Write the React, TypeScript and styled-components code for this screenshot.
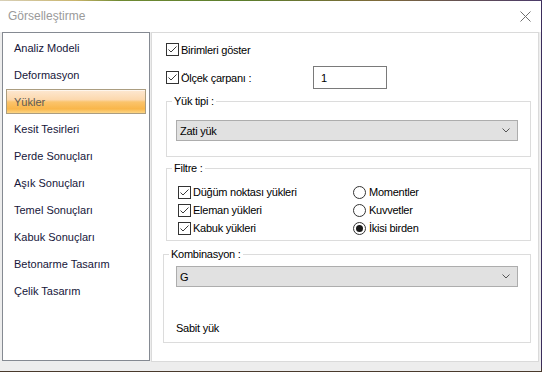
import React from 'react';
import styled, { createGlobalStyle } from 'styled-components';

const GlobalStyle = createGlobalStyle`
  html, body {
    margin: 0;
    padding: 0;
    background: #3b2d5c;
    overflow: hidden;
  }
  body {
    font-family: "Liberation Sans", Arial, sans-serif;
    font-size: 11px;
  }
`;

const Desktop = styled.div`
  width: 542px;
  height: 372px;
  display: flex;
  flex-direction: column;
  background: linear-gradient(180deg, #3b2d5c 0%, #3b2d5c 98%, #4a3a28 100%);
`;

const DesktopStrip = styled.div`
  height: 1px;
  background: linear-gradient(90deg, #d8d0b8 0%, #c9b46a 14%, #6f8a32 22%, #5b7d2c 45%, #7f6a3a 70%, #4b3a6a 100%);
`;

const Window = styled.div`
  width: 541px;
  height: 370px;
  background: #ededed;
  display: flex;
  flex-direction: column;
`;

const TitleBar = styled.div`
  height: 31px;
  background: #ffffff;
  display: flex;
  align-items: center;
  justify-content: space-between;
  padding: 0 10px 1px 8px;
  box-sizing: border-box;
`;

const Title = styled.span`
  font-size: 12px;
  color: #9a9a9a;
`;

const Body = styled.div`
  display: flex;
  gap: 1px;
  padding-left: 2px;
`;

const Sidebar = styled.div`
  width: 148px;
  height: 329px;
  box-sizing: border-box;
  border: 1px solid #858a92;
  background: #ffffff;
  padding: 1px 3px 0 3px;
  display: flex;
  flex-direction: column;
`;

const NavItem = styled.div<{ $active?: boolean }>`
  height: 27px;
  display: flex;
  align-items: center;
  box-sizing: border-box;
  padding-left: 8px;
  color: #16163a;
  font-size: 11px;
  ${(p) =>
    p.$active &&
    `
    height: 25px;
    margin: 1px 0 1px 0;
    padding-left: 7px;
    border: 1px solid #ab9d80;
    color: #5c5a56;
    background: linear-gradient(180deg, #fde8d2 0%, #fcd8ad 42%, #fbc46c 52%, #f9b64a 82%, #fcd585 100%);
    box-shadow: inset 0 1px 0 rgba(255,255,255,0.6);
  `}
`;

const Content = styled.div`
  width: 388px;
  height: 330px;
  box-sizing: border-box;
  border: 1px solid #dadada;
  background: #ffffff;
  padding: 10px 7px 0 14px;
  display: flex;
  flex-direction: column;
  color: #000000;
  letter-spacing: -0.25px;
`;

const Row = styled.label`
  display: flex;
  align-items: center;
  height: 13px;
`;

const ScaleRow = styled.div`
  display: flex;
  align-items: center;
  height: 23px;
  margin-top: 10px;
`;

const ScaleLabel = styled.label`
  display: flex;
  align-items: center;
  width: 147px;
`;

const TextBox = styled.div`
  width: 74px;
  height: 23px;
  box-sizing: border-box;
  border: 1px solid #7a7a7a;
  background: #ffffff;
  display: flex;
  align-items: center;
  padding-left: 7px;
`;

const Box = styled.span`
  width: 13px;
  height: 13px;
  box-sizing: border-box;
  border: 1px solid #333333;
  background: #ffffff;
  display: inline-flex;
  align-items: center;
  justify-content: center;
  margin-right: 2px;
  flex: none;
`;

const Round = styled.span<{ $on?: boolean }>`
  width: 13px;
  height: 13px;
  box-sizing: border-box;
  border: 1px solid #333333;
  border-radius: 50%;
  background: #ffffff;
  display: inline-flex;
  align-items: center;
  justify-content: center;
  margin-right: 3px;
  flex: none;
  &::after {
    content: '';
    width: 7px;
    height: 7px;
    border-radius: 50%;
    background: ${(p) => (p.$on ? '#1a1a1a' : 'transparent')};
  }
`;

const Group = styled.fieldset<{ $shift?: number; $top: number }>`
  margin: ${(p) => p.$top}px 0 0 ${(p) => -(p.$shift || 0)}px;
  padding: 0 12px 0 ${(p) => 9 + (p.$shift || 0)}px;
  border: 1px solid #dcdcdc;
  min-width: 0;
  width: ${(p) => 365 + (p.$shift || 0)}px;
  box-sizing: border-box;

  & > legend {
    margin-left: ${(p) => -4 - (p.$shift || 0)}px;
  }
`;

const Legend = styled.legend`
  padding: 0 2px;
  line-height: 13px;
  height: 13px;
`;

const Select = styled.div<{ $top: number; $bottom?: number }>`
  margin-top: ${(p) => p.$top}px;
  margin-bottom: ${(p) => p.$bottom || 0}px;
  height: 21px;
  box-sizing: border-box;
  border: 1px solid #adadad;
  background: #e1e1e1;
  display: flex;
  align-items: center;
  justify-content: space-between;
  padding: 0 7px 0 3px;
`;

const FilterGrid = styled.div`
  display: grid;
  grid-template-columns: 175px 1fr;
  grid-auto-rows: 18px;
  padding: 8px 0 3px 2px;
`;

const GridCell = styled.label`
  display: flex;
  align-items: center;
`;

const Note = styled.div`
  margin-top: 35px;
  height: 13px;
  line-height: 13px;
  padding-bottom: 7px;
`;

const Check = () => (
  <Box>
    <svg width="11" height="11" viewBox="0 0 11 11">
      <polyline points="1.5,5.5 4,8 9.5,2.5" fill="none" stroke="#3a3a3a" strokeWidth="1" />
    </svg>
  </Box>
);

const Chevron = () => (
  <svg width="8" height="5" viewBox="0 0 8 5">
    <polyline points="0.5,0.5 4,4 7.5,0.5" fill="none" stroke="#555" strokeWidth="1" />
  </svg>
);

const CloseIcon = () => (
  <svg width="11" height="11" viewBox="0 0 11 11">
    <path d="M0.5 0.5 L10.5 10.5 M10.5 0.5 L0.5 10.5" stroke="#6f6f6f" strokeWidth="1" />
  </svg>
);

const navItems = [
  'Analiz Modeli',
  'Deformasyon',
  'Yükler',
  'Kesit Tesirleri',
  'Perde Sonuçları',
  'Aşık Sonuçları',
  'Temel Sonuçları',
  'Kabuk Sonuçları',
  'Betonarme Tasarım',
  'Çelik Tasarım',
];

const App: React.FC = () => {
  return (
    <Desktop>
      <GlobalStyle />
      <DesktopStrip />
      <Window>
        <TitleBar>
          <Title>Görselleştirme</Title>
          <CloseIcon />
        </TitleBar>
        <Body>
          <Sidebar>
            {navItems.map((item) => (
              <NavItem key={item} $active={item === 'Yükler'}>
                {item}
              </NavItem>
            ))}
          </Sidebar>
          <Content>
            <Row>
              <Check />
              Birimleri göster
            </Row>
            <ScaleRow>
              <ScaleLabel>
                <Check />
                Ölçek çarpanı :
              </ScaleLabel>
              <TextBox>1</TextBox>
            </ScaleRow>

            <Group $top={6}>
              <Legend>Yük tipi :</Legend>
              <Select $top={12} $bottom={15}>
                <span>Zati yük</span>
                <Chevron />
              </Select>
            </Group>

            <Group $top={5}>
              <Legend>Filtre :</Legend>
              <FilterGrid>
                <GridCell>
                  <Check />
                  Düğüm noktası yükleri
                </GridCell>
                <GridCell>
                  <Round />
                  Momentler
                </GridCell>
                <GridCell>
                  <Check />
                  Eleman yükleri
                </GridCell>
                <GridCell>
                  <Round />
                  Kuvvetler
                </GridCell>
                <GridCell>
                  <Check />
                  Kabuk yükleri
                </GridCell>
                <GridCell>
                  <Round $on />
                  İkisi birden
                </GridCell>
              </FilterGrid>
            </Group>

            <Group $top={7} $shift={3}>
              <Legend>Kombinasyon :</Legend>
              <Select $top={5}>
                <span>G</span>
                <Chevron />
              </Select>
              <Note>Sabit yük</Note>
            </Group>
          </Content>
        </Body>
      </Window>
    </Desktop>
  );
};

export default App;
